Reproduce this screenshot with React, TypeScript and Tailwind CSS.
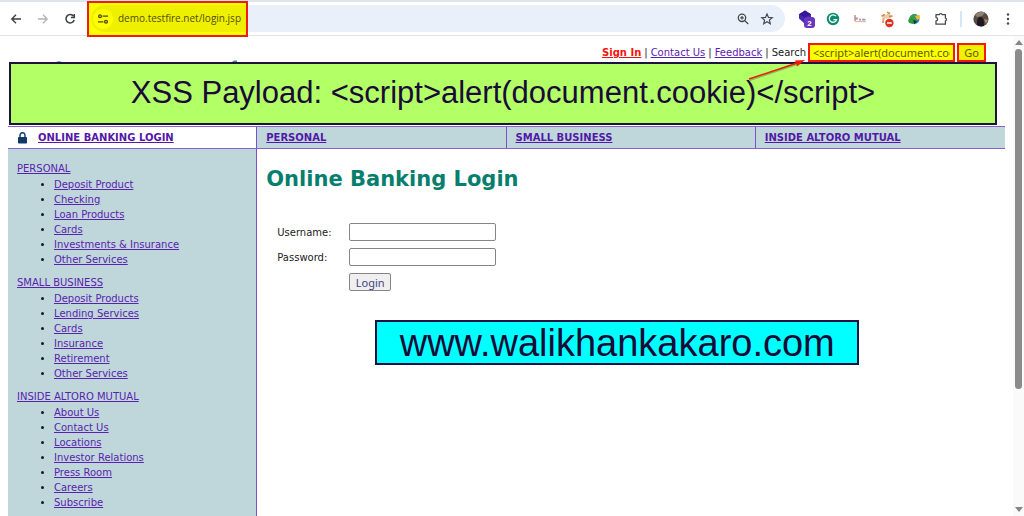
import type { ReactNode } from "react";

type Group = { title: string; items: string[] };

const groups: Group[] = [
  {
    title: "PERSONAL",
    items: ["Deposit Product", "Checking", "Loan Products", "Cards", "Investments & Insurance", "Other Services"],
  },
  {
    title: "SMALL BUSINESS",
    items: ["Deposit Products", "Lending Services", "Cards", "Insurance", "Retirement", "Other Services"],
  },
  {
    title: "INSIDE ALTORO MUTUAL",
    items: ["About Us", "Contact Us", "Locations", "Investor Relations", "Press Room", "Careers", "Subscribe"],
  },
];

const tabs = ["PERSONAL", "SMALL BUSINESS", "INSIDE ALTORO MUTUAL"];

function IconButton({ label, children }: { label: string; children: ReactNode }) {
  return (
    <button type="button" aria-label={label} className="flex size-4 shrink-0 items-center justify-center">
      {children}
    </button>
  );
}

function Toolbar() {
  return (
    <div className="flex h-9 shrink-0 items-center border-t-2 border-b border-t-[#dfe4ee] border-b-[#e3e3e8] bg-white px-2">
      <div className="flex gap-[11px] pr-[11px]">
        <IconButton label="Back">
          <svg viewBox="0 0 16 16" className="size-4" fill="none" stroke="#3c4043" strokeWidth="1.4">
            <path d="M13 8H4M8 3.8 3.8 8 8 12.2" />
          </svg>
        </IconButton>
        <IconButton label="Forward">
          <svg viewBox="0 0 16 16" className="size-4" fill="none" stroke="#b0b3b7" strokeWidth="1.3">
            <path d="M3 8h9M8 3.8 12.2 8 8 12.2" />
          </svg>
        </IconButton>
        <IconButton label="Reload">
          <svg viewBox="0 0 16 16" className="size-4" fill="none" stroke="#3c4043" strokeWidth="1.5">
            <path d="M11.6 5.2A4.2 4.2 0 1 0 12.2 9" />
            <path d="M12.3 3v3.4H8.9" />
          </svg>
        </IconButton>
      </div>
      <div className="flex h-[27px] flex-1 items-center gap-4 rounded-full bg-[#eaf0fa] pr-[10px]">
        <div className="z-10 -ml-0.5 flex h-9 w-[161px] shrink-0 items-center border-2 border-[#f01c10] bg-[#ffff00] pl-0.5">
          <div className="flex h-[27px] flex-1 items-center gap-[5px] rounded-l-full bg-[#eff000] pl-0.5">
            <span className="flex size-5 shrink-0 items-center justify-center rounded-full bg-[#ffff00]">
              <svg viewBox="0 0 12 12" className="size-3" fill="none" stroke="#4a4a00" strokeWidth="1.3">
                <circle cx="3" cy="3.2" r="1.4" />
                <path d="M5.6 3.2H11M1 8.8h5.4" />
                <circle cx="9" cy="8.8" r="1.4" />
              </svg>
            </span>
            <input
              aria-label="Address"
              defaultValue="demo.testfire.net/login.jsp"
              className="w-full min-w-0 bg-transparent font-['Open_Sans',sans-serif] text-[10px] text-[#4f4f00] outline-none"
            />
          </div>
        </div>
        <div className="flex-1" />
        <div className="flex gap-2">
          <IconButton label="Zoom">
            <svg viewBox="0 0 16 16" className="size-4" fill="none" stroke="#45494d" strokeWidth="1.3">
              <circle cx="7" cy="6.8" r="3.7" />
              <path d="m9.8 9.6 3.4 3.4M5.2 6.8h3.6M7 5v3.6" />
            </svg>
          </IconButton>
          <IconButton label="Bookmark">
            <svg viewBox="0 0 16 16" className="size-4" fill="none" stroke="#45494d" strokeWidth="1.2">
              <path d="m8 3 1.5 3.4 3.7.3-2.8 2.4.9 3.6L8 10.8l-3.3 1.9.9-3.6-2.8-2.4 3.7-.3z" />
            </svg>
          </IconButton>
        </div>
      </div>
      <div className="flex items-center gap-[11px] pl-[13px]">
        <IconButton label="Extension with 2 notices">
          <svg viewBox="0 0 16 18" className="h-[18px] w-4 overflow-visible">
            <path d="m7 .5 6 3.7v6L7 14 1 8.5V4.2z" fill="#4a26b0" />
            <path d="m7 .5 6 3.7-6 3.6-6-3.6z" fill="#36179a" />
            <rect x="6" y="7" width="11" height="11" rx="3" fill="#6a35c0" />
            <text x="11.5" y="15.6" textAnchor="middle" fontSize="8" fontWeight="bold" fontFamily="Liberation Sans" fill="#fff">2</text>
          </svg>
        </IconButton>
        <IconButton label="Grammar checker">
          <svg viewBox="0 0 16 16" className="size-4">
            <circle cx="8" cy="8" r="6.2" fill="#0b8a70" />
            <path d="M10.9 5.2A3.7 3.7 0 1 0 11.6 8.6H8.4" fill="none" stroke="#fff" strokeWidth="1.3" />
          </svg>
        </IconButton>
        <IconButton label="Highlighter">
          <svg viewBox="0 0 16 16" className="size-4">
            <path d="M3 4v6" stroke="#d98a6a" strokeWidth="1.5" />
            <path d="M3 7.5h3M7 8.6h2M10 8.6h3.4" stroke="#9d92c4" strokeWidth="1.8" />
            <path d="M3 10.6h11" stroke="#e9b9a4" strokeWidth="1.2" />
          </svg>
        </IconButton>
        <IconButton label="Blocked extension">
          <svg viewBox="0 0 16 18" className="h-[18px] w-4 overflow-visible">
            <path d="M3 7 10 3l3 3-1 2-8 1z" fill="#e3cdb4" />
            <path d="M2.5 6.2 6 4.5M8 2.2l3 1.2M10 6.5l3.5-.5" stroke="#d38b38" strokeWidth="1.6" />
            <path d="M4.5 8.5 4 13" stroke="#e6a04c" strokeWidth="2" />
            <circle cx="10.4" cy="13" r="4.2" fill="#dd3020" />
            <path d="M8 13h4.8" stroke="#fff" strokeWidth="1.5" />
          </svg>
        </IconButton>
        <IconButton label="Download manager">
          <svg viewBox="0 0 16 16" className="size-4">
            <circle cx="8.5" cy="8" r="5" fill="#2a83bd" />
            <path d="M3 8c.5-3 4-5.5 7.5-4.5L9 8l-4 2z" fill="#39a045" />
            <path d="m9 5 4.5-1.5.5 4-3 1.5z" fill="#f0bd22" />
            <path d="m2 9 4-3 3 3-2 4-4-1z" fill="#2f9a3c" />
            <path d="m7 9 4 1-2.5 3.5z" fill="#163b25" />
          </svg>
        </IconButton>
        <IconButton label="Extensions">
          <svg viewBox="0 0 16 16" className="size-4" fill="none" stroke="#45494d" strokeWidth="1.3" strokeLinejoin="round">
            <path d="M3 3.6h3.4a1.4 1 0 0 1 2.8 0h3.2v3.6a1 1.4 0 0 1 0 2.8v3.2H3v-3.4a1.6 1.6 0 0 0 0-3.2z" />
          </svg>
        </IconButton>
        <span className="h-4 w-0.5 bg-[#d3e6fb]" />
        <IconButton label="Profile">
          <svg viewBox="0 0 16 16" className="size-4">
            <circle cx="8" cy="8" r="7.6" fill="#5a4b42" />
            <path d="M2 4a7.6 7.6 0 0 1 10-2.3L9 5 4 6z" fill="#8d8174" />
            <path d="M4 14c0-4 0-8 3.5-8S11 10 11 15a7.6 7.6 0 0 1-7-1z" fill="#1d1822" />
            <path d="m11 8 4 1-2 4z" fill="#a98c74" />
          </svg>
        </IconButton>
        <IconButton label="Menu">
          <svg viewBox="0 0 16 16" className="size-4" fill="#45494d">
            <circle cx="8" cy="3.5" r="1.2" />
            <circle cx="8" cy="8" r="1.2" />
            <circle cx="8" cy="12.5" r="1.2" />
          </svg>
        </IconButton>
      </div>
    </div>
  );
}

function TopLinks() {
  return (
    <div className="flex h-[26px] shrink-0 items-center justify-end gap-[3px] pt-[7px] pr-[19px] text-[10px] text-[#222]">
      <a href="#signin" className="font-bold text-[#f3140c] underline">Sign In</a>
      <span>|</span>
      <a href="#contact" className="text-[#5a22b0] underline">Contact Us</a>
      <span>|</span>
      <a href="#feedback" className="text-[#5a22b0] underline">Feedback</a>
      <span>|</span>
      <form className="flex items-center gap-0.5" onSubmit={(e) => e.preventDefault()}>
        <label htmlFor="query">Search</label>
        <input
          id="query"
          defaultValue="<script>alert(document.cookie)</script>"
          className="h-[19px] w-[147px] border-2 border-[#f5190c] bg-[#ffff00] px-[3px] font-['Noto_Sans',sans-serif] text-[11px] text-[#5c5c00] outline-none"
        />
        <button className="h-[19px] w-[29px] border-2 border-[#f5190c] bg-[#f0f000] font-['Noto_Sans',sans-serif] text-[11px] leading-none text-[#5c5c00]">
          Go
        </button>
      </form>
    </div>
  );
}

function LoginForm() {
  return (
    <form
      className="mt-[30px] ml-[11px] grid grid-cols-[72px_147px] items-center gap-y-[7px] text-[10px]"
      onSubmit={(e) => e.preventDefault()}
    >
      <label htmlFor="username">Username:</label>
      <input id="username" className="h-[18px] rounded-xs border border-[#858585] px-1 outline-none" />
      <label htmlFor="password">Password:</label>
      <input id="password" type="password" className="h-[18px] rounded-xs border border-[#858585] px-1 outline-none" />
      <button className="col-start-2 h-[18px] w-[42px] rounded-xs border border-[#858585] bg-[#efefef] font-['Noto_Sans',sans-serif] text-[11px] leading-none text-[#3f3f82]">
        Login
      </button>
    </form>
  );
}

export default function App() {
  return (
    <div className="flex h-screen flex-col overflow-hidden bg-white font-['DejaVu_Sans',sans-serif] text-[#222]">
      <Toolbar />
      <div className="flex min-h-0 flex-1">
        <div className="relative flex min-w-0 flex-1 flex-col overflow-hidden px-2">
          <svg viewBox="0 0 190 2" className="absolute top-6 left-[54px] h-0.5 w-[190px]" fill="#3f8f8c">
            <path d="M2 2q3-1.5 6 0zM178 2l2-1.5h3V2z" />
          </svg>
          <TopLinks />
          <div className="mr-2 ml-px flex h-[63px] shrink-0 items-center justify-center border-2 border-[#1d1240] bg-[#b2ff66] font-['Liberation_Sans',sans-serif] text-[31px] text-[#1a0a38]">
            XSS Payload: &lt;script&gt;alert(document.cookie)&lt;/script&gt;
          </div>
          <nav className="mt-px grid h-[23px] shrink-0 grid-cols-4 border-y border-[#8b62cc] text-[10px] font-bold text-[#5417a8]">
            <div className="flex items-center gap-[11px] border-r border-[#7b50c8] pl-[10px]">
              <svg viewBox="0 0 9 12" className="h-3 w-[9px]">
                <path d="M2 5V3.2a2.5 2.5 0 0 1 5 0V5" fill="none" stroke="#17456f" strokeWidth="1.5" />
                <rect y="5" width="9" height="6.5" rx=".8" fill="#103b68" />
              </svg>
              <a href="#login" className="underline">ONLINE BANKING LOGIN</a>
            </div>
            {tabs.map((tab) => (
              <div key={tab} className="flex items-center border-r border-[#7b50c8] bg-[#bfd7da] pl-[9px] last:border-r-0">
                <a href="#tab" className="underline">{tab}</a>
              </div>
            ))}
          </nav>
          <div className="grid min-h-0 flex-1 grid-cols-4">
            <aside className="flex flex-col gap-2 border-r border-[#7b50c8] bg-[#bfd7da] pt-3 pl-[9px] text-[10px] leading-[15px] text-[#5a22b0]">
              {groups.map((group) => (
                <section key={group.title}>
                  <a href="#group" className="mb-px block underline">{group.title}</a>
                  <ul className="list-disc pl-[37px] marker:text-[#1c1030]">
                    {group.items.map((item) => (
                      <li key={item}>
                        <a href="#item" className="underline">{item}</a>
                      </li>
                    ))}
                  </ul>
                </section>
              ))}
            </aside>
            <main className="col-span-3 pt-4 pl-[9px]">
              <h1 className="text-[21px] leading-7 font-bold text-[#087f6e]">Online Banking Login</h1>
              <LoginForm />
              <div className="mt-[29px] ml-[109px] flex h-[45px] w-[484px] items-center justify-center border-2 border-[#1d1240] bg-[#00ffff] font-['Liberation_Sans',sans-serif] text-[38px] leading-none text-[#1a0a38]">
                www.walikhankakaro.com
              </div>
            </main>
          </div>
          <svg viewBox="0 0 60 24" className="absolute top-[21px] right-[206px] h-6 w-[60px]">
            <path d="M3 23 50 7" stroke="#5c7a4a" strokeOpacity=".5" strokeWidth="2" />
            <path d="M2 22 50 6" stroke="#f5190c" strokeWidth="1.4" />
            <path d="m58 3-8 6.6-2-6z" fill="#f5190c" />
          </svg>
        </div>
        <div className="flex w-[11px] shrink-0 flex-col items-center bg-[#fafafa] py-1">
          <svg viewBox="0 0 8 5" className="h-[5px] w-2" fill="#858585"><path d="m4 0 4 5H0z" /></svg>
          <div className="mt-1 h-[72%] w-[7px] rounded-full bg-[#8b8b8b]" />
          <div className="flex-1" />
          <svg viewBox="0 0 8 5" className="h-[5px] w-2" fill="#858585"><path d="m4 5 4-5H0z" /></svg>
        </div>
      </div>
    </div>
  );
}
